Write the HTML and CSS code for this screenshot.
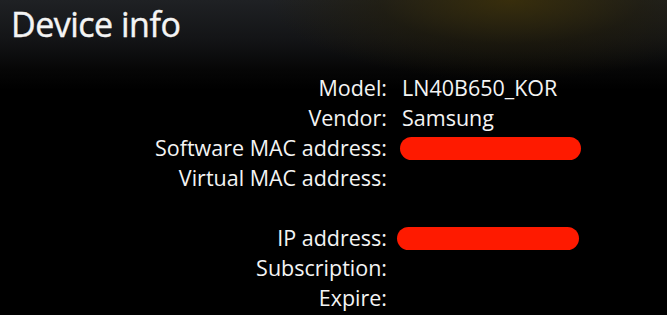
FILE: index.html
```html
<!DOCTYPE html>
<html>
<head>
<meta charset="utf-8">
<link rel="stylesheet" href="styles.css">
</head>
<body>
<div class="screen">
  <h1 class="title">Device info</h1>
  <div class="info">
    <div class="label">Model:</div><div class="value">LN40B650_KOR</div>
    <div class="label">Vendor:</div><div class="value">Samsung</div>
    <div class="label">Software MAC address:</div><div class="value"><span class="redact r1"></span></div>
    <div class="label">Virtual MAC address:</div><div class="value"></div>
    <div class="label"></div><div class="value"></div>
    <div class="label">IP address:</div><div class="value"><span class="redact r2"></span></div>
    <div class="label">Subscription:</div><div class="value"></div>
    <div class="label">Expire:</div><div class="value"></div>
  </div>
</div>
</body>
</html>
```
FILE: styles.css
```css
html, body {
  margin: 0;
  padding: 0;
  background: #000;
}
.screen {
  width: 667px;
  height: 315px;
  overflow: hidden;
  font-family: "Open Sans", "DejaVu Sans", sans-serif;
  color: #f4f4f4;
  background:
    radial-gradient(ellipse 240px 80px at 510px 0px, rgba(60, 48, 8, 0.85), rgba(36, 29, 5, 0.45) 55%, rgba(0,0,0,0) 100%),
    linear-gradient(to bottom, #1f2124 0px, #131416 40px, #060606 70px, #000 90px);
}
.title {
  margin: 0;
  padding: 1px 0 0 11px;
  font-size: 34px;
  font-weight: 400;
  letter-spacing: -0.5px;
  line-height: 46px;
  -webkit-text-stroke: 0.4px #f4f4f4;
}
.info {
  display: grid;
  grid-template-columns: 387px 1fr;
  grid-auto-rows: 30px;
  column-gap: 15px;
  margin-top: 26px;
  font-size: 21.5px;
  line-height: 30px;
}
.label {
  text-align: right;
}
.value {
  display: flex;
  align-items: center;
}
.redact {
  display: block;
  height: 23px;
  width: 181px;
  border-radius: 12px;
  background: #fe1a00;
}
.r1 {
  margin-left: -2px;
}
.r2 {
  margin-left: -5px;
  width: 182px;
}
```
